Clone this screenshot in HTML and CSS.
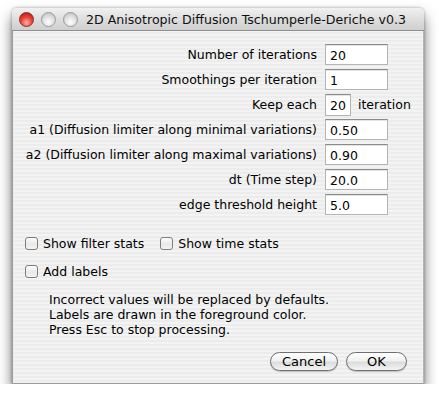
FILE: index.html
```html
<!DOCTYPE html>
<html>
<head>
<meta charset="utf-8">
<title>2D Anisotropic Diffusion</title>
<link rel="stylesheet" href="styles.css">
</head>
<body>
<div class="window">
  <div class="titlebar">
    <div class="lights">
      <span class="light close"></span>
      <span class="light"></span>
      <span class="light"></span>
    </div>
    <div class="title">2D Anisotropic Diffusion Tschumperle-Deriche v0.3</div>
  </div>
  <div class="content">
    <div class="form">
      <label class="lbl">Number of iterations</label>
      <div class="val"><span class="field">20</span></div>
      <label class="lbl">Smoothings per iteration</label>
      <div class="val"><span class="field">1</span></div>
      <label class="lbl">Keep each</label>
      <div class="val"><span class="field small">20</span><span class="unit">iteration</span></div>
      <label class="lbl">a1 (Diffusion limiter along minimal variations)</label>
      <div class="val"><span class="field">0.50</span></div>
      <label class="lbl">a2 (Diffusion limiter along maximal variations)</label>
      <div class="val"><span class="field">0.90</span></div>
      <label class="lbl">dt (Time step)</label>
      <div class="val"><span class="field">20.0</span></div>
      <label class="lbl">edge threshold height</label>
      <div class="val"><span class="field">5.0</span></div>
    </div>
    <div class="checks">
      <div class="checkrow">
        <span class="check"><span class="box"></span>Show filter stats</span>
        <span class="check"><span class="box"></span>Show time stats</span>
      </div>
      <div class="checkrow">
        <span class="check"><span class="box"></span>Add labels</span>
      </div>
    </div>
    <div class="message">
      <div>Incorrect values will be replaced by defaults.</div>
      <div>Labels are drawn in the foreground color.</div>
      <div>Press Esc to stop processing.</div>
    </div>
    <div class="buttons">
      <span class="btn cancel">Cancel</span>
      <span class="btn ok">OK</span>
    </div>
  </div>
</div>
</body>
</html>
```
FILE: styles.css
```css
html, body {
  margin: 0;
  padding: 0;
  background: #ffffff;
}
body {
  padding: 8px 15px 0 12px;
  font-family: "DejaVu Sans", "Liberation Sans", sans-serif;
  font-size: 12.5px;
  color: #000;
}
.window {
  width: 412px;
  height: 376px;
  display: flex;
  flex-direction: column;
  border-radius: 5px 5px 0 0;
  box-shadow: 0 8px 14px rgba(0,0,0,0.55), 0 0 3px rgba(0,0,0,0.35);
  background: repeating-linear-gradient(to bottom, #ececec 0, #ececec 2px, #f3f3f3 2px, #f3f3f3 4px);
  overflow: hidden;
}
.titlebar {
  height: 22px;
  flex: none;
  display: flex;
  align-items: center;
  background: linear-gradient(to bottom, #f1f1f1 0%, #dcdcdc 55%, #cfcfcf 100%);
  border-bottom: 1px solid #8f8f8f;
  border-radius: 5px 5px 0 0;
}
.lights {
  display: flex;
  gap: 7px;
  padding-left: 7px;
  margin-top: 1px;
}
.light {
  width: 13px;
  height: 13px;
  border-radius: 50%;
  background: radial-gradient(circle at 50% 70%, #ffffff 0%, #e6e6e6 40%, #b9b9b9 100%);
  border: 1px solid #9a9a9a;
}
.light.close {
  background: radial-gradient(circle at 50% 75%, #ffb3ad 0%, #f0453a 45%, #a3120b 100%);
  border-color: #8b2a24;
}
.title {
  margin-left: 8px;
  margin-top: 1px;
  font-size: 12.6px;
  white-space: nowrap;
  color: #111;
}
.content {
  flex: 1;
  display: flex;
  flex-direction: column;
  border-left: 1px solid #9c9c9c;
  border-right: 1px solid #b5b5b5;
  border-bottom: 1px solid #9c9c9c;
}
.form {
  display: grid;
  grid-template-columns: 292px 1fr;
  column-gap: 8px;
  row-gap: 4px;
  padding: 13px 0 0 12px;
  align-items: center;
}
.lbl {
  text-align: right;
  white-space: nowrap;
  line-height: 21px;
}
.val {
  display: flex;
  align-items: center;
  height: 21px;
}
.field {
  display: block;
  box-sizing: border-box;
  width: 63px;
  height: 21px;
  line-height: 20px;
  padding: 1px 0 0 4px;
  background: #fff;
  border: 1px solid #b4b4b4;
  border-top-color: #8a8a8a;
  box-shadow: inset 0 1px 0 #e4e4e4;
}
.field.small {
  width: 26px;
  height: 22px;
}
.unit {
  margin-left: 7px;
}
.checks {
  display: flex;
  flex-direction: column;
  gap: 13px;
  padding: 21px 0 0 12px;
}
.checkrow {
  display: flex;
  gap: 16px;
  height: 15px;
  align-items: center;
}
.check {
  display: flex;
  align-items: center;
  gap: 5px;
}
.box {
  display: block;
  box-sizing: border-box;
  width: 13px;
  height: 13px;
  border: 1px solid #7e7e7e;
  border-radius: 3px;
  background: linear-gradient(to bottom, #fdfdfd 0%, #e9e9e9 55%, #f4f4f4 100%);
}
.message {
  padding: 13px 0 0 36px;
  line-height: 15px;
}
.buttons {
  display: flex;
  justify-content: flex-end;
  gap: 8px;
  padding: 15px 16px 0 0;
}
.btn {
  display: flex;
  align-items: center;
  justify-content: center;
  box-sizing: border-box;
  height: 19px;
  font-size: 13px;
  border: 1px solid #6f6f6f;
  border-radius: 10px;
  background: linear-gradient(to bottom, #ffffff 0%, #f1f1f1 45%, #dcdcdc 55%, #f4f4f4 100%);
  box-shadow: 0 1px 1px rgba(0,0,0,0.2);
}
.btn.cancel { width: 68px; }
.btn.ok { width: 61px; }
```
